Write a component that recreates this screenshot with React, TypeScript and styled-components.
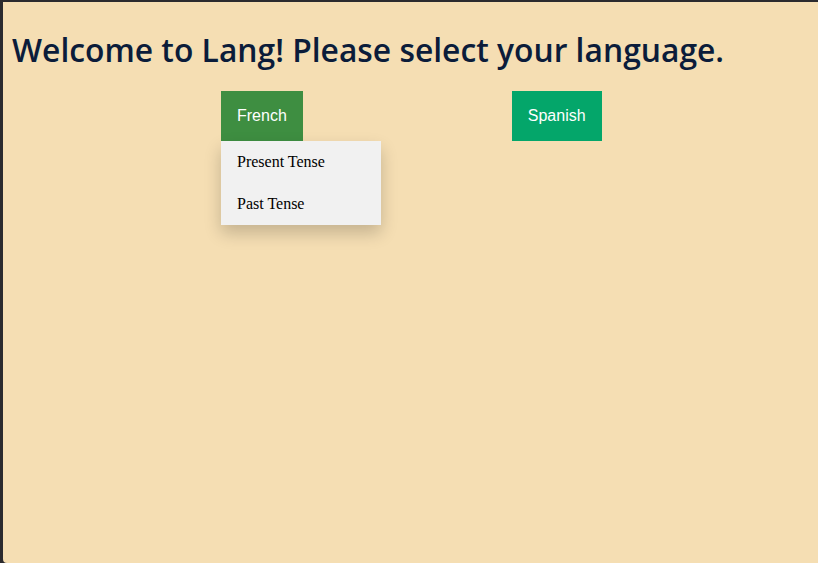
import * as React from 'react';
import styled, { createGlobalStyle } from 'styled-components';

const GlobalStyle = createGlobalStyle`
    html, body {
        margin: 0;
        padding: 0;
        height: 100%;
        background: #2b2a2e;
    }
    #root {
        height: 100%;
    }
`;

const languages = [
    { name: 'French', color: '#3e8e41', tenses: ['Present Tense', 'Past Tense'], open: true },
    { name: 'Spanish', color: '#04a66a', tenses: ['Present Tense', 'Past Tense'], open: false },
];

export default function App() {
    return (
        <>
            <GlobalStyle />
            <Frame>
                <Page>
                    <Title>Welcome to Lang! Please select your language.</Title>
                    <LanguageRow>
                        {languages.map((lang) => (
                            <Dropdown key={lang.name}>
                                <LangButton $color={lang.color}>{lang.name}</LangButton>
                                {lang.open && (
                                    <Menu>
                                        {lang.tenses.map((t) => (
                                            <MenuItem key={t}>{t}</MenuItem>
                                        ))}
                                    </Menu>
                                )}
                            </Dropdown>
                        ))}
                    </LanguageRow>
                </Page>
            </Frame>
        </>
    );
}

const Frame = styled.div`
    height: 100%;
    box-sizing: border-box;
    padding: 2px 0 0 3px;
    display: flex;
`;

const Page = styled.div`
    flex: 1;
    background: #f5deb3;
    padding: 25px 0 0 9px;
    border-bottom-left-radius: 4px;
`;

const Title = styled.h1`
    margin: 0;
    font-family: "Open Sans", sans-serif;
    font-weight: 600;
    font-size: 31.8px;
    line-height: 45px;
    color: #0b1c3a;
`;

const LanguageRow = styled.div`
    display: flex;
    gap: 209px;
    padding-left: 209px;
    margin-top: 19px;
`;

const Dropdown = styled.div`
    position: relative;
`;

const LangButton = styled.button<{ $color: string }>`
    background: ${(p) => p.$color};
    color: white;
    border: none;
    padding: 16px;
    font-family: "Liberation Sans", Arial, sans-serif;
    font-size: 16px;
    line-height: 18px;
`;

const Menu = styled.div`
    position: absolute;
    top: 100%;
    left: 0;
    width: 160px;
    background: #f1f1f1;
    box-shadow: 0 8px 16px 0 rgba(0, 0, 0, 0.2);
    z-index: 1;
`;

const MenuItem = styled.a`
    display: block;
    padding: 12px 16px;
    font-family: "Liberation Serif", "Times New Roman", serif;
    font-size: 16px;
    line-height: 18px;
    color: black;
`;
